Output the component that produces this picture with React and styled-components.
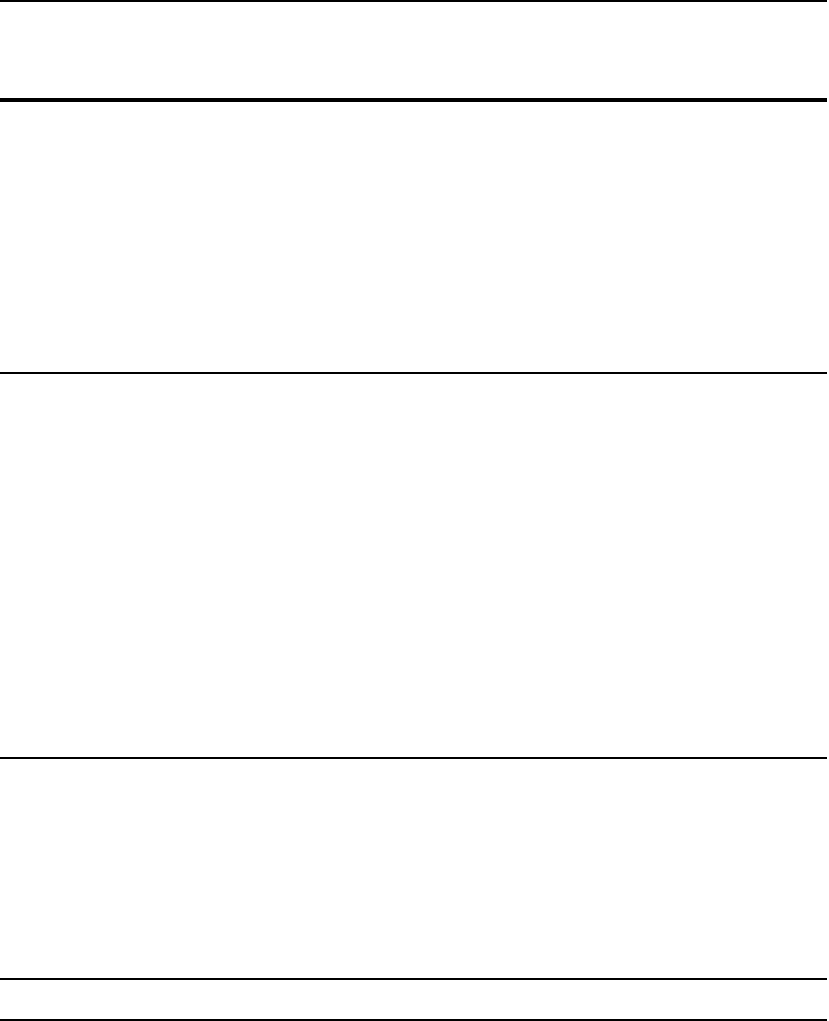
import styled, { createGlobalStyle } from "styled-components";

const Global = createGlobalStyle`
  html, body { margin: 0; padding: 0; background: #fff; }
  body { font-family: "Liberation Sans", Arial, sans-serif; }
`;

const Page = styled.div`
  width: 827px;
  display: flex;
  flex-direction: column;
`;

const Header = styled.header`
  height: 96px;
  border-top: 2px solid #000;
  border-bottom: 4px solid #000;
`;

const Section = styled.section`
  height: ${(p) => p.$h}px;
  border-bottom: 2px solid #000;
`;

function App() {
  return (
    <>
      <Global />
      <Page>
        <Header />
        <Section $h={270} />
        <Section $h={383} />
        <Section $h={219} />
        <Section $h={39} />
      </Page>
    </>
  );
}

export default App;
